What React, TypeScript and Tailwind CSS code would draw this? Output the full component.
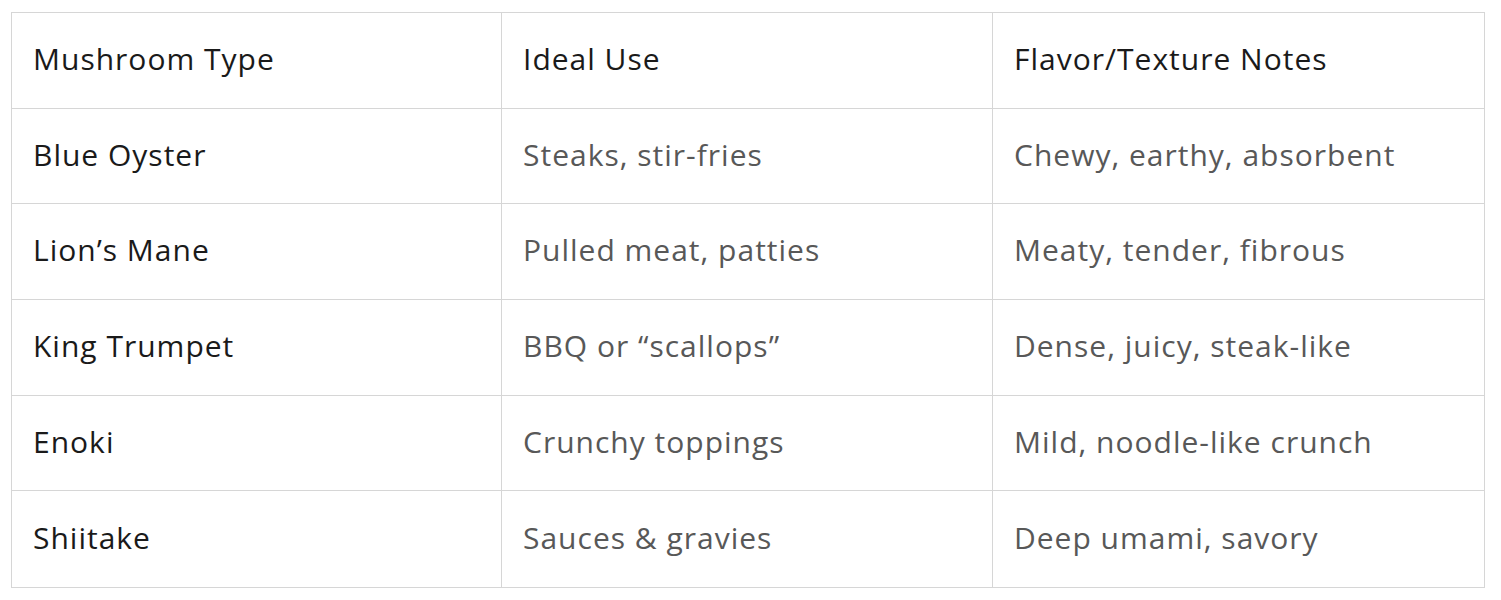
import React from "react";

const rows = [
  ["Blue Oyster", "Steaks, stir-fries", "Chewy, earthy, absorbent"],
  ["Lion\u2019s Mane", "Pulled meat, patties", "Meaty, tender, fibrous"],
  ["King Trumpet", "BBQ or \u201Cscallops\u201D", "Dense, juicy, steak-like"],
  ["Enoki", "Crunchy toppings", "Mild, noodle-like crunch"],
  ["Shiitake", "Sauces & gravies", "Deep umami, savory"],
];

export default function App() {
  return (
    <div className="w-[1501px] h-[600px] bg-white pt-[12px] pl-[11px]" style={{ fontFamily: "'Open Sans', 'Noto Sans', sans-serif" }}>
      <div className="w-[1474px] border border-[#d6d6d6] grid grid-cols-[490px_491px_1fr]">
        {["Mushroom Type", "Ideal Use", "Flavor/Texture Notes"].map((h, i) => (
          <div key={h} className={`h-[95.7px] flex items-center pl-[21px] pb-[4px] text-[30px] tracking-[1px] text-[#1a1a1a] border-b border-[#d6d6d6] ${i < 2 ? "border-r" : ""}`}>
            {h}
          </div>
        ))}
        {rows.map((r, ri) =>
          r.map((c, ci) => (
            <div
              key={ri + "-" + ci}
              className={`h-[95.7px] flex items-center pl-[21px] pb-[4px] text-[30px] tracking-[1px] ${ci === 0 ? "text-[#1a1a1a]" : "text-[#585858]"} border-[#d6d6d6] ${ri < rows.length - 1 ? "border-b" : ""} ${ci < 2 ? "border-r" : ""}`}
            >
              {c}
            </div>
          ))
        )}
      </div>
    </div>
  );
}
